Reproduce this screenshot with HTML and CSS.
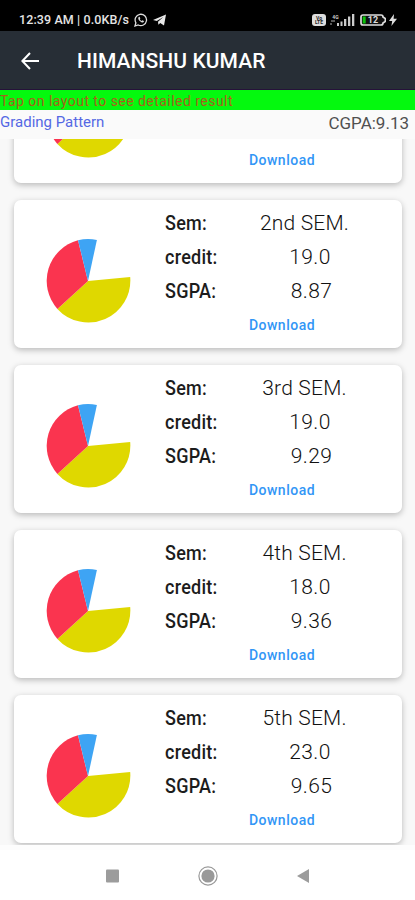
FILE: index.html
```html
<!DOCTYPE html>
<html>
    <head>
        <meta charset="utf-8">
        <title>Results</title>
        <link rel="stylesheet" href="styles.css">
    </head>
    <body>
        <div class="status-bar">
            <span class="clock">12:39 AM | 0.0KB/s</span>
            <svg class="whatsapp" width="14" height="14" viewBox="0 0 14 14">
                <path d="M1 13l.9-3.2A5.7 5.7 0 1 1 4.2 12z" fill="none" stroke="#ddd" stroke-width="1.3"/>
                <path d="M4.7 4c-.9 1.1-.3 2.7 1 4s3 2 4.1 1.1l.1-1-1.5-.8-.8.7c-.9-.4-1.5-1-1.9-1.9l.7-.7L5.6 3.8z" fill="#ddd"/>
            </svg>
            <svg class="telegram" width="14" height="12" viewBox="0 0 14 12">
                <path d="M0 6L13 .5 11 11.5 7.2 8.9 5.4 10.8 5 7.7 10.3 3 3.8 7.1z" fill="#e8e8e8"/>
            </svg>
            <svg class="volte" width="14" height="12" viewBox="0 0 14 12">
                <rect width="14" height="12" rx="3" fill="#ddd"/>
                <text x="7" y="5.5" class="tiny">Vo</text>
                <text x="7" y="10.3" class="tiny">LTE</text>
            </svg>
            <svg class="signal" width="25" height="14" viewBox="0 0 25 14">
                <text x="5.5" y="5.5" class="tiny net">4G</text>
                <path d="M0 11h2M1 8h4" stroke="#777" stroke-width="1.3"/>
                <path d="M7 10h2v3H7zM10.5 8.5h2V13h-2zM14 6h2.3v7H14zM18 3.5h2.3V13H18zM22 1h2.3v12H22z" fill="#ccc"/>
            </svg>
            <svg class="battery" width="26" height="12" viewBox="0 0 26 12">
                <path d="M3 1h18q2 0 2 2l2.3 1.5v3L23 9q0 2-2 2H3q-2 0-2-2V3q0-2 2-2z" fill="#111" stroke="#ddd" stroke-width="1.7"/>
                <rect x="2.7" y="2.5" width="3" height="7" fill="#0bc20b"/>
                <text x="13" y="9.3" class="level">12</text>
            </svg>
            <svg class="bolt" width="8" height="12" viewBox="0 0 8 12">
                <path d="M5 0L0 7h3.2L2.4 12 8 4.8H4.6z" fill="#ddd"/>
            </svg>
        </div>

        <div class="toolbar">
            <svg class="back" width="18" height="18" viewBox="0 0 18 18">
                <path d="M18 9H1.6M9 1L1.4 9 9 17" fill="none" stroke="#fff" stroke-width="2"/>
            </svg>
            <span class="title">HIMANSHU KUMAR</span>
        </div>
        <div class="notice">Tap on layout to see detailed result</div>
        <div class="summary">
            <span class="grading">Grading Pattern</span>
            <span class="cgpa">CGPA:9.13</span>
        </div>

        <div class="results"></div>

        <div class="nav-bar">
            <svg width="13" height="14" viewBox="0 0 13 14"><rect y=".5" width="13" height="13" rx="1" fill="#9c9c9c"/></svg>
            <svg width="20" height="20" viewBox="0 0 20 20">
                <circle cx="10" cy="10" r="9.1" fill="none" stroke="#999" stroke-width="1.2"/>
                <circle cx="10" cy="10" r="6.6" fill="#999"/>
            </svg>
            <svg width="12" height="14" viewBox="0 0 12 14"><path d="M0 7L12 0v14z" fill="#9c9c9c"/></svg>
        </div>

        <script>
            const semesters=[
                {},  // scrolled past, only its bottom is visible
                {sem:'2nd SEM.',credit:'19.0',sgpa:'8.87'},
                {sem:'3rd SEM.',credit:'19.0',sgpa:'9.29'},
                {sem:'4th SEM.',credit:'18.0',sgpa:'9.36'},
                {sem:'5th SEM.',credit:'23.0',sgpa:'9.65'}
            ];

            const pie=`<svg class="pie" width="85" height="85" viewBox="0 0 85 85">
                <path d="M42 42L84.2 38A42 42 0 0 1 11.4 69.9z" fill="#dfd800"/>
                <path d="M42 42L11.4 69.9A42 42 0 0 1 32 1.3z" fill="#fa344f"/>
                <path d="M42 42L32 1.3A42 42 0 0 1 50.9 1z" fill="#3ea4f4"/>
            </svg>`;

            function row(label,value,type){
                if(!value){
                    return '<div class="row"></div>';
                }
                return `<div class="row"><span class="label">${label}</span><span class="value ${type}">${value}</span></div>`;
            }

            let html='';
            semesters.forEach((s)=>{
                html+=`<div class="card">
                    ${pie}
                    <div class="details">
                        ${row('Sem:',s.sem,'name')}
                        ${row('credit:',s.credit,'credit')}
                        ${row('SGPA:',s.sgpa,'sgpa')}
                        <div class="download">Download</div>
                    </div>
                </div>`;
            });
            document.querySelector('.results').innerHTML=html;
        </script>
    </body>
</html>
```
FILE: styles.css
```css
body{
    margin: 0;
    height: 900px;
    display: flex;
    flex-direction: column;
    overflow: hidden;
    background-color: white;
    font-family: Roboto, sans-serif;
}
svg{
    display: block;
    flex: none;
}
.status-bar{
    height: 31px;
    flex: none;
    box-sizing: border-box;
    display: flex;
    align-items: center;
    padding: 8px 17px 0 19px;
    background-color: black;
    color: #e4e4e4;
}
.clock{
    font-size: 12.5px;
    font-weight: 500;
    width: 115px;
    white-space: nowrap;
    letter-spacing: 0.1px;
}
.telegram{
    margin-left: 5px;
}
.volte{
    margin-left: auto;
}
.signal{
    margin-left: 4px;
}
.battery{
    margin-left: 5px;
}
.bolt{
    margin-left: 3px;
    margin-right: 1px;
}
.tiny{
    font-size: 5px;
    font-weight: bold;
    text-anchor: middle;
    fill: #222;
}
.net{
    fill: #ccc;
}
.level{
    font-size: 9px;
    font-weight: bold;
    text-anchor: middle;
    fill: #ddd;
}
.toolbar{
    height: 59px;
    flex: none;
    box-sizing: border-box;
    display: flex;
    align-items: center;
    padding: 2px 0 0 21px;
    background-color: #272e36;
    border-bottom: 1px solid #26123a;
}
.title{
    margin-left: 38px;
    color: white;
    font-size: 21px;
    font-weight: 500;
    letter-spacing: 0.07px;
}
.notice{
    height: 20px;
    flex: none;
    background-color: #04f90e;
    color: #a8601c;
    font-size: 14px;
    line-height: 23px;
    letter-spacing: 0.46px;
}
.summary{
    height: 29px;
    flex: none;
    display: flex;
    justify-content: space-between;
    background-color: #fafafa;
}
.grading{
    color: #5468e4;
    font-size: 15px;
    line-height: 24px;
}
.cgpa{
    margin-right: 6px;
    color: #505050;
    font-size: 17px;
    line-height: 27px;
}
.results{
    height: 706px;
    flex: none;
    box-sizing: border-box;
    display: flex;
    flex-direction: column;
    justify-content: flex-end;
    gap: 17px;
    padding: 0 13px 2px 14px;
    background-color: #f8f8f8;
    overflow: hidden;
}
.card{
    height: 148px;
    flex: none;
    box-sizing: border-box;
    display: flex;
    padding-left: 32px;
    background-color: white;
    border-radius: 7px;
    box-shadow: 0 2px 6px rgba(0,0,0,0.26);
}
.pie{
    margin-top: 39px;
}
.details{
    margin-left: 34px;
    padding-top: 6px;
    flex: 1;
}
.row{
    height: 34px;
    display: flex;
    line-height: 34px;
}
.label{
    width: 70px;
    font-size: 20px;
    font-weight: 500;
    letter-spacing: 0.3px;
    color: #1c1c1c;
    transform: scaleX(0.9);
    transform-origin: left;
}
.value{
    width: 150px;
    text-align: center;
    font-size: 21px;
    font-weight: 300;
    letter-spacing: 0.4px;
    color: #111;
}
.name{
    width: 139px;
    letter-spacing: 0.2px;
}
.sgpa{
    width: 153px;
}
.download{
    width: 234px;
    text-align: center;
    font-size: 14px;
    font-weight: 500;
    line-height: 34px;
    letter-spacing: 0.5px;
    color: #3296f6;
}
.nav-bar{
    flex: 1;
    display: flex;
    justify-content: center;
    align-items: center;
    gap: 88px;
    padding: 1px 1px 0 0;
    border-top: 5px solid #fdfdfd;
    box-sizing: border-box;
}
.nav-bar svg:nth-child(2){
    margin: 0 -9px 0 -9px;
}
```
